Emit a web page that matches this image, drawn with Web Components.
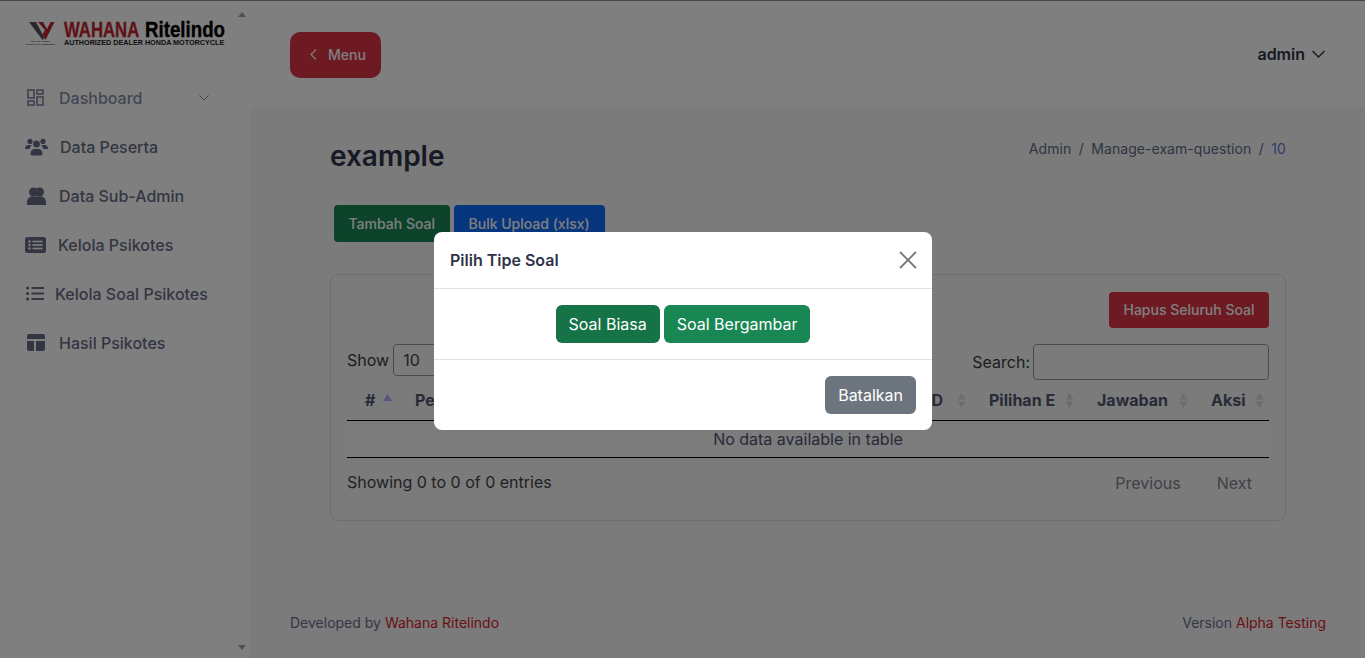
<!DOCTYPE html>
<html lang="id">
<head>
<meta charset="utf-8">
<title>Manage exam question</title>
<style>
  html, body { margin: 0; height: 100%; overflow: hidden; }
  body { font-family: Inter, "Liberation Sans", sans-serif; background: #fff; }
</style>
</head>
<body>
<admin-app></admin-app>
<script>
const ICONS = {
  dashboard: `<svg width="17" height="17" viewBox="0 0 17 17" fill="none" stroke="currentColor" stroke-width="1.7"><rect x="1" y="1" width="6" height="8"/><rect x="10" y="1" width="6" height="4"/><rect x="1" y="12" width="6" height="4"/><rect x="10" y="8" width="6" height="8"/></svg>`,
  users: `<svg width="23" height="18" viewBox="0 0 23 18" fill="currentColor"><circle cx="5" cy="3.4" r="2.6"/><circle cx="18" cy="3.4" r="2.6"/><circle cx="11.5" cy="6" r="3.4"/><path d="M0 10.5C0 8.4 1.5 7 3.3 7h2.4c.4 0 .8.1 1.1.3C5.500 8.300 4.800 9.800 4.800 11H1C.4 11 0 10.900 0 10.500zM23 10.500C23 8.400 21.500 7 19.700 7h-2.400c-.4 0-.8.1-1.100.3 1.300 1 2 2.500 2 3.700H22c.6 0 1-.1 1-.5zM5.500 15.500c0-2.700 2-4.500 4-4.500h4c2 0 4 1.800 4 4.500 0 1.300-.6 2-1.500 2H7c-.9 0-1.500-.7-1.500-2z"/></svg>`,
  friends: `<svg width="19" height="18" viewBox="0 0 19 18" fill="currentColor"><circle cx="6.500" cy="5" r="4.500"/><circle cx="12.500" cy="5" r="4.500"/><path d="M0 15c0-3 2.300-5.500 5-5.500h9c2.700 0 5 2.500 5 5.500v3H0z"/></svg>`,
  listAlt: `<svg width="21" height="16" viewBox="0 0 21 16"><rect width="21" height="16" rx="2.500" fill="currentColor"/><g fill="#fff"><circle cx="4.500" cy="4.500" r="1.200"/><circle cx="4.500" cy="8" r="1.200"/><circle cx="4.500" cy="11.500" r="1.200"/><rect x="7.500" y="3.700" width="10" height="1.600"/><rect x="7.500" y="7.200" width="10" height="1.600"/><rect x="7.500" y="10.700" width="10" height="1.600"/></g></svg>`,
  listUl: `<svg width="18" height="15" viewBox="0 0 18 15" fill="currentColor"><circle cx="1.600" cy="2" r="1.600"/><circle cx="1.600" cy="7.500" r="1.600"/><circle cx="1.600" cy="13" r="1.600"/><rect x="5.500" y="1" width="12.500" height="2"/><rect x="5.500" y="6.500" width="12.500" height="2"/><rect x="5.500" y="12" width="12.500" height="2"/></svg>`,
  layout: `<svg width="18" height="17" viewBox="0 0 18 17" fill="currentColor"><path d="M2 0h14a2 2 0 0 1 2 2v3H0V2a2 2 0 0 1 2-2zM0 7h7v10H2a2 2 0 0 1-2-2zM9 7h9v8a2 2 0 0 1-2 2H9z"/></svg>`,
};

class SidebarItem extends HTMLElement {
  connectedCallback() {
    const icon = ICONS[this.getAttribute("icon")] || "";
    const left = this.getAttribute("left") || "0";
    const gap = this.getAttribute("gap") || "15";
    const tone = this.hasAttribute("muted") ? "#858ca6" : "#666c85";
    const caret = this.hasAttribute("caret")
      ? `<svg class="caret" width="10" height="6" viewBox="0 0 10 6" fill="none" stroke="#8b8b8b" stroke-width="1"><path d="M.5.5 5 5 9.500.5"/></svg>`
      : "";
    this.shadowRoot.innerHTML = `
      <style>
        :host { display: flex; align-items: center; height: 49px; font-size: 16px; font-weight: 500; color: ${tone}; padding-left: ${left}px; }
        .ic { display: flex; margin-right: ${gap}px; }
        .caret { margin-left: auto; margin-right: 41px; }
      </style>
      <span class="ic">${icon}</span><slot></slot>${caret}
    `;
  }
  constructor() {
    super();
    this.attachShadow({ mode: "open" });
  }
}

class BrandLogo extends HTMLElement {
  constructor() {
    super();
    this.attachShadow({ mode: "open" });
    this.shadowRoot.innerHTML = `
      <style>
        :host { display: flex; height: 30px; font-family: "Liberation Sans", Arial, sans-serif; color: #000; }
        .mark { width: 33px; margin-right: 7px; display: flex; flex-direction: column; align-items: center; }
        .mark svg { display: block; }
        .tiny { font-size: 2.5px; line-height: 2.5px; font-weight: 700; white-space: nowrap; color: #333; }
        .words { width: 161px; padding-top: 1px; }
        .line { display: flex; height: 18px; font-size: 22px; line-height: 18px; font-weight: 700; -webkit-text-stroke: .4px currentColor; }
        .line span { display: block; white-space: nowrap; transform-origin: left center; }
        .wahana { width: 81px; color: #c0272d; }
        .wahana span { transform: scaleX(.76); }
        .ritel span { transform: scaleX(.85); }
        .sub { height: 7px; font-size: 7px; line-height: 7px; font-weight: 700; white-space: nowrap; transform: scaleX(1.03); transform-origin: left center; color: #222; }
      </style>
      <div class="mark">
        <svg width="33" height="21" viewBox="0 0 33 21">
          <path d="M5 2h7l8.500 16-2 2z" fill="#555"/>
          <path d="M14 2h5l4 7 3.500-7h4L21.500 20l-3-6 2.500-4z" fill="#c0272d"/>
        </svg>
        <div class="tiny">WAHANA RITEL</div>
        <div class="tiny">PT WAHANA RITELINDO</div>
      </div>
      <div class="words">
        <div class="line">
          <div class="wahana"><span>WAHANA</span></div>
          <div class="ritel"><span>Ritelindo</span></div>
        </div>
        <div class="sub">AUTHORIZED DEALER HONDA MOTORCYCLE</div>
      </div>
    `;
  }
}

class AppSidebar extends HTMLElement {
  constructor() {
    super();
    this.attachShadow({ mode: "open" });
    this.shadowRoot.innerHTML = `
      <style>
        :host { display: block; position: relative; width: 250px; flex: none; background: #fff; font-family: Inter, "Liberation Sans", sans-serif; }
        brand-logo { padding: 19px 0 0 24px; }
        nav { margin-top: 23px; }
        .arrow { position: absolute; left: 238px; width: 0; height: 0; border-left: 4.500px solid transparent; border-right: 4.500px solid transparent; }
        .up { top: 11px; border-bottom: 5px solid #a0a0a0; }
        .down { bottom: 8px; border-top: 5px solid #a0a0a0; }
      </style>
      <brand-logo></brand-logo>
      <nav>
        <sidebar-item icon="dashboard" left="27" muted caret>Dashboard</sidebar-item>
        <sidebar-item icon="users" left="25" gap="12">Data Peserta</sidebar-item>
        <sidebar-item icon="friends" left="27" gap="13">Data Sub-Admin</sidebar-item>
        <sidebar-item icon="listAlt" left="25" gap="12">Kelola Psikotes</sidebar-item>
        <sidebar-item icon="listUl" left="26" gap="11">Kelola Soal Psikotes</sidebar-item>
        <sidebar-item icon="layout" left="27" gap="14">Hasil Psikotes</sidebar-item>
      </nav>
      <span class="arrow up"></span>
      <span class="arrow down"></span>
    `;
  }
}

class UiButton extends HTMLElement {
  connectedCallback() {
    const bg = this.getAttribute("bg") || "#198754";
    const pad = this.getAttribute("pad") || "0 13px";
    const h = this.getAttribute("h") || "38";
    const size = this.getAttribute("size") || "16";
    const radius = this.getAttribute("radius") || "6";
    const weight = this.getAttribute("weight") || "400";
    this.shadowRoot.innerHTML = `
      <style>
        :host { display: inline-flex; align-items: center; height: ${h}px; padding: ${pad}; background: ${bg}; color: #fff; border-radius: ${radius}px; font-size: ${size}px; font-weight: ${weight}; white-space: nowrap; box-sizing: border-box; }
      </style>
      <slot></slot>
    `;
  }
  constructor() {
    super();
    this.attachShadow({ mode: "open" });
  }
}

class TopBar extends HTMLElement {
  constructor() {
    super();
    this.attachShadow({ mode: "open" });
    this.shadowRoot.innerHTML = `
      <style>
        :host { display: flex; align-items: center; justify-content: space-between; height: 107px; padding: 0 40px; box-sizing: border-box; background: #fff; }
        .menu { gap: 11px; margin-top: 1px; }
        .user { display: flex; align-items: center; gap: 7px; font-size: 16px; font-weight: 600; color: #2f3349; margin-top: -2px; }
      </style>
      <ui-button class="menu" bg="#dc3545" h="46" size="14" weight="500" radius="10" pad="0 15px 2px 20px">
        <svg width="7" height="11" viewBox="0 0 7 11" fill="none" stroke="#fff" stroke-width="1.200"><path d="M6 .5 1 5.500l5 5"/></svg>Menu
      </ui-button>
      <div class="user">admin
        <svg width="13" height="8" viewBox="0 0 13 8" fill="none" stroke="#2f3349" stroke-width="1.400"><path d="M.5 1 6.500 7l6-6"/></svg>
      </div>
    `;
  }
}

class SortHead extends HTMLElement {
  static get observedAttributes() {
    return ["state"];
  }
  constructor() {
    super();
    this.attachShadow({ mode: "open" });
  }
  connectedCallback() {
    const asc = this.getAttribute("state") === "asc";
    this.shadowRoot.innerHTML = `
      <style>
        :host { display: flex; justify-content: space-between; align-items: center; font-weight: 700; font-size: 16px; color: #50566f; white-space: nowrap; }
        svg { flex: none; margin-top: ${asc ? "-6px" : "0"}; }
      </style>
      <slot></slot>
      ${asc
        ? `<svg width="9" height="7" viewBox="0 0 9 7"><path d="M4.500 0 9 7H0z" fill="#a9aefc"/></svg>`
        : `<svg width="9" height="15" viewBox="0 0 9 15" fill="#d8d8d8"><path d="M4.500 0 8.500 6.500H.5zM4.500 15 .5 8.500h8z"/></svg>`}
    `;
  }
}

class DataCard extends HTMLElement {
  constructor() {
    super();
    this.attachShadow({ mode: "open" });
    const heads = [
      ["#", 50, "asc"], ["Pertanyaan", 150], ["Pilihan A", 104], ["Pilihan B", 104], ["Pilihan C", 102],
      ["Pilihan D", 114], ["Pilihan E", 108], ["Jawaban", 114], ["Aksi", 76],
    ];
    const cols = heads.map((h) => `<col style="width:${h[1]}px">`).join("");
    const ths = heads.map((h) => `<th><sort-head state="${h[2] || ""}">${h[0]}</sort-head></th>`).join("");
    this.shadowRoot.innerHTML = `
      <style>
        :host { display: block; height: 247px; box-sizing: border-box; border: 1px solid #d9dee3; border-radius: 8px; padding: 17px 16px 0; font-size: 16px; color: #50566f; }
        .tools { display: flex; justify-content: flex-end; }
        .filters { display: flex; justify-content: space-between; align-items: flex-start; margin-top: 16px; color: #3a3a3a; }
        .field { display: flex; align-items: center; }
        .select { width: 120px; height: 32px; box-sizing: border-box; border: 1px solid #999; border-radius: 4px; padding-left: 9px; margin-left: 4px; display: flex; align-items: center; color: #444; }
        .search { width: 236px; height: 36px; box-sizing: border-box; border: 1px solid #999; border-radius: 4px; margin-left: 3px; }
        table { width: 922px; table-layout: fixed; border-collapse: collapse; margin-top: 1px; }
        th { height: 39px; box-sizing: border-box; padding: 0 5px 0 18px; border-bottom: 1px solid #000; text-align: left; }
        td { height: 36px; padding: 0; text-align: center; background: #f9f9f9; border-bottom: 1px solid #000; }
        .foot { display: flex; justify-content: space-between; align-items: center; margin-top: 13px; color: #444; }
        .pages { display: flex; gap: 36px; padding-right: 17px; color: #7e828c; margin-top: 2px; }
      </style>
      <div class="tools"><ui-button bg="#dc3545" h="36" size="14" weight="500" radius="4" pad="0 14.500px 2px">Hapus Seluruh Soal</ui-button></div>
      <div class="filters">
        <div class="field">Show<span class="select">10</span></div>
        <div class="field">Search:<span class="search"></span></div>
      </div>
      <table>
        <colgroup>${cols}</colgroup>
        <tr>${ths}</tr>
        <tr><td colspan="9">No data available in table</td></tr>
      </table>
      <div class="foot"><span>Showing 0 to 0 of 0 entries</span><span class="pages"><span>Previous</span><span>Next</span></span></div>
    `;
  }
}

class PageContent extends HTMLElement {
  constructor() {
    super();
    this.attachShadow({ mode: "open" });
    this.shadowRoot.innerHTML = `
      <style>
        :host { display: block; padding: 0 79px 0 80px; }
        .head { display: flex; justify-content: space-between; align-items: flex-start; height: 97px; }
        h1 { margin: 31px 0 0; font-size: 28px; line-height: 34px; font-weight: 600; color: #2f3349; }
        .crumbs { margin-top: 32px; font-size: 14px; line-height: 17px; color: #5d6a85; letter-spacing: .05px; }
        .crumbs i { font-style: normal; margin: 0 7.500px; }
        .crumbs b { font-weight: 400; color: #6a75e0; }
        .actions { display: flex; gap: 4px; padding-left: 4px; margin-bottom: 32px; }
      </style>
      <div class="head">
        <h1>example</h1>
        <div class="crumbs">Admin<i>/</i>Manage-exam-question<i>/</i><b>10</b></div>
      </div>
      <div class="actions">
        <ui-button bg="#198754" h="37" size="14" weight="500" radius="4" pad="0 14.500px">Tambah Soal</ui-button>
        <ui-button bg="#0d6efd" h="37" size="14" weight="500" radius="4" pad="0 15px">Bulk Upload (xlsx)</ui-button>
      </div>
      <data-card></data-card>
    `;
  }
}

class PageFooter extends HTMLElement {
  constructor() {
    super();
    this.attachShadow({ mode: "open" });
    this.shadowRoot.innerHTML = `
      <style>
        :host { display: flex; justify-content: space-between; padding: 0 39px 0 40px; margin-top: 93px; font-size: 14px; line-height: 17px; color: #697089; }
        b { font-weight: 400; color: #d7232b; }
      </style>
      <span>Developed by <b>Wahana Ritelindo</b></span>
      <span>Version <b>Alpha Testing</b></span>
    `;
  }
}

class ChoiceModal extends HTMLElement {
  constructor() {
    super();
    this.attachShadow({ mode: "open" });
    this.shadowRoot.innerHTML = `
      <style>
        :host { position: fixed; inset: 0; display: block; background: rgba(0,0,0,.5); }
        .dialog { position: absolute; left: 434px; top: 232px; width: 498px; background: #fff; border-radius: 8px; color: #2f3349; }
        header { display: flex; align-items: center; justify-content: space-between; height: 56px; padding: 0 15px 0 16px; border-bottom: 1px solid #dee2e6; font-weight: 600; font-size: 16px; }
        .body { display: flex; justify-content: center; gap: 4px; padding: 16px; border-bottom: 1px solid #dee2e6; }
        footer { display: flex; justify-content: flex-end; padding: 16px; }
      </style>
      <div class="dialog" role="dialog">
        <header>Pilih Tipe Soal
          <svg width="18" height="18" viewBox="0 0 18 18" stroke="#777" stroke-width="1.800" fill="none"><path d="M1 1l16 16M17 1 1 17"/></svg>
        </header>
        <div class="body">
          <ui-button bg="#157347">Soal Biasa</ui-button>
          <ui-button bg="#198754">Soal Bergambar</ui-button>
        </div>
        <footer><ui-button bg="#6c757d">Batalkan</ui-button></footer>
      </div>
    `;
  }
}

class AdminApp extends HTMLElement {
  constructor() {
    super();
    this.attachShadow({ mode: "open" });
    this.shadowRoot.innerHTML = `
      <style>
        :host { display: flex; height: 658px; box-sizing: border-box; border-top: 1px solid #888; font-family: Inter, "Liberation Sans", sans-serif; }
        main { flex: 1; min-width: 0; background: #f6f6f6; }
      </style>
      <app-sidebar></app-sidebar>
      <main>
        <top-bar></top-bar>
        <page-content></page-content>
        <page-footer></page-footer>
      </main>
      <choice-modal></choice-modal>
    `;
  }
}

customElements.define("sidebar-item", SidebarItem);
customElements.define("brand-logo", BrandLogo);
customElements.define("app-sidebar", AppSidebar);
customElements.define("ui-button", UiButton);
customElements.define("top-bar", TopBar);
customElements.define("sort-head", SortHead);
customElements.define("data-card", DataCard);
customElements.define("page-content", PageContent);
customElements.define("page-footer", PageFooter);
customElements.define("choice-modal", ChoiceModal);
customElements.define("admin-app", AdminApp);
</script>
</body>
</html>
